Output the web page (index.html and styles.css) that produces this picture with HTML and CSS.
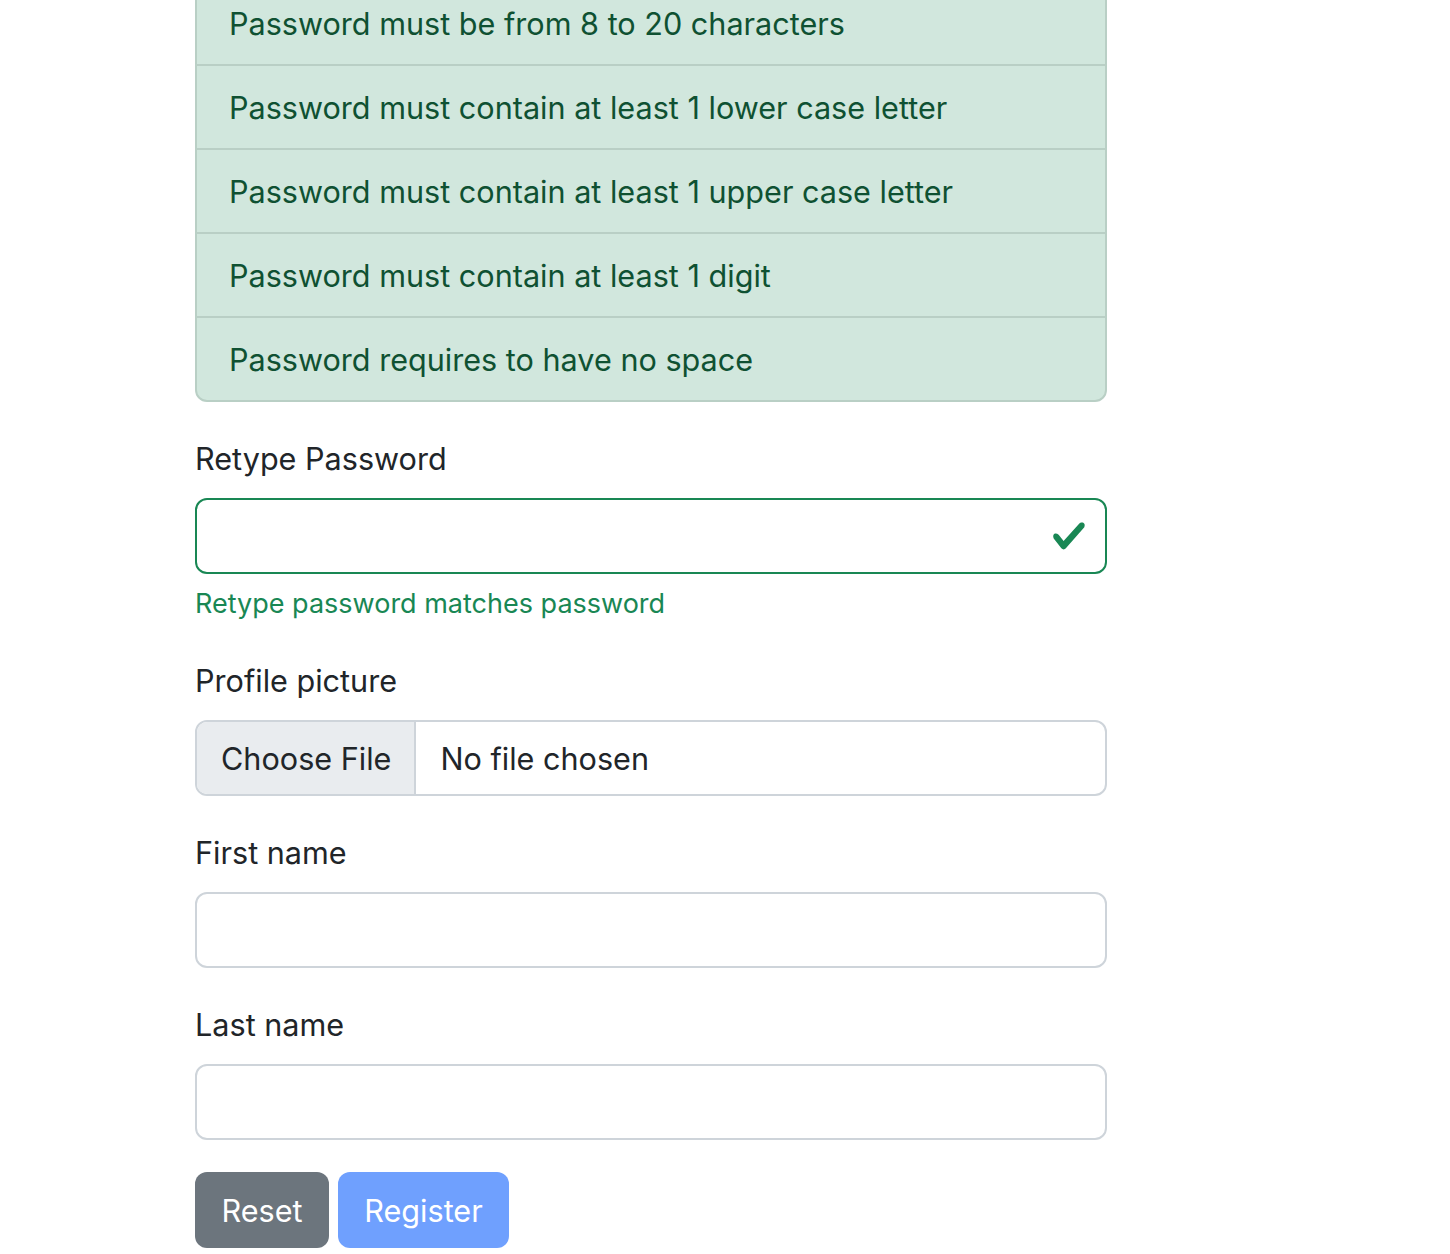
FILE: index.html
```html
<!DOCTYPE html>
<html lang="en">
<head>
<meta charset="utf-8">
<title>Register</title>
<link rel="stylesheet" href="styles.css">
</head>
<body>
<main class="page">
  <form class="form">
    <ul class="rules">
      <li class="rule">Password must be from 8 to 20 characters</li>
      <li class="rule">Password must contain at least 1 lower case letter</li>
      <li class="rule">Password must contain at least 1 upper case letter</li>
      <li class="rule">Password must contain at least 1 digit</li>
      <li class="rule">Password requires to have no space</li>
    </ul>

    <div class="group">
      <label class="label">Retype Password</label>
      <div class="input valid">
        <svg class="check" viewBox="0 0 8 8" width="36" height="36"><path fill="#198754" d="M2.3 6.73.6 4.53c-.4-1.04.46-1.4 1.1-.8l1.1 1.4 3.4-3.8c.6-.63 1.6-.27 1.2.7l-4 4.6c-.43.5-.8.4-1.1.1z"/></svg>
      </div>
      <div class="feedback">Retype password matches password</div>
    </div>

    <div class="group">
      <label class="label">Profile picture</label>
      <div class="input file">
        <span class="file-btn">Choose File</span>
        <span class="file-text">No file chosen</span>
      </div>
    </div>

    <div class="group">
      <label class="label">First name</label>
      <div class="input"></div>
    </div>

    <div class="group">
      <label class="label">Last name</label>
      <div class="input"></div>
    </div>

    <div class="actions">
      <span class="btn btn-reset">Reset</span>
      <span class="btn btn-register">Register</span>
    </div>
  </form>
</main>
</body>
</html>
```

FILE: styles.css
```css
html, body {
  margin: 0;
  padding: 0;
  background: #ffffff;
}
body {
  font-family: Inter, "Noto Sans", sans-serif;
  font-size: 30.6px;
  line-height: 48px;
  color: #212529;
}
.page {
  padding-left: 195px;
  margin-top: -20px;
}
.form {
  width: 912px;
}
.rules {
  list-style: none;
  margin: 0 0 32px 0;
  padding: 0;
  border: 2px solid #b9cfc5;
  border-radius: 12px;
  background: #d1e7dd;
  color: #0f5132;
}
.rule {
  padding: 18px 32px 16px;
  border-top: 2px solid #b9cfc5;
}
.rule:first-child {
  border-top: 0;
}
.group {
  margin-bottom: 32px;
}
.label {
  display: block;
  padding-top: 1px;
  margin-bottom: 15px;
}
.input {
  position: relative;
  height: 76px;
  box-sizing: border-box;
  border: 2px solid #ced4da;
  border-radius: 12px;
  background: #fff;
}
.input.valid {
  border-color: #198754;
}
.check {
  position: absolute;
  right: 18px;
  top: 18px;
}
.feedback {
  margin-top: 9px;
  font-size: 27px;
  line-height: 41px;
  color: #198754;
}
.file {
  display: flex;
  align-items: center;
  overflow: hidden;
}
.file-btn {
  align-self: stretch;
  display: flex;
  align-items: center;
  padding: 2px 23px 0 24px;
  background: #e9ecef;
  border-right: 2px solid #ced4da;
  margin-right: 24px;
}
.file-text {
  padding-top: 2px;
}
.actions {
  display: flex;
  gap: 9px;
}
.btn {
  display: inline-block;
  height: 76px;
  box-sizing: border-box;
  padding: 15px 0 13px;
  border-radius: 12px;
  color: #fff;
  text-align: center;
}
.btn-reset {
  background: #6c757d;
  width: 134px;
}
.btn-register {
  background: #6fa0fe;
  width: 171px;
}
```
